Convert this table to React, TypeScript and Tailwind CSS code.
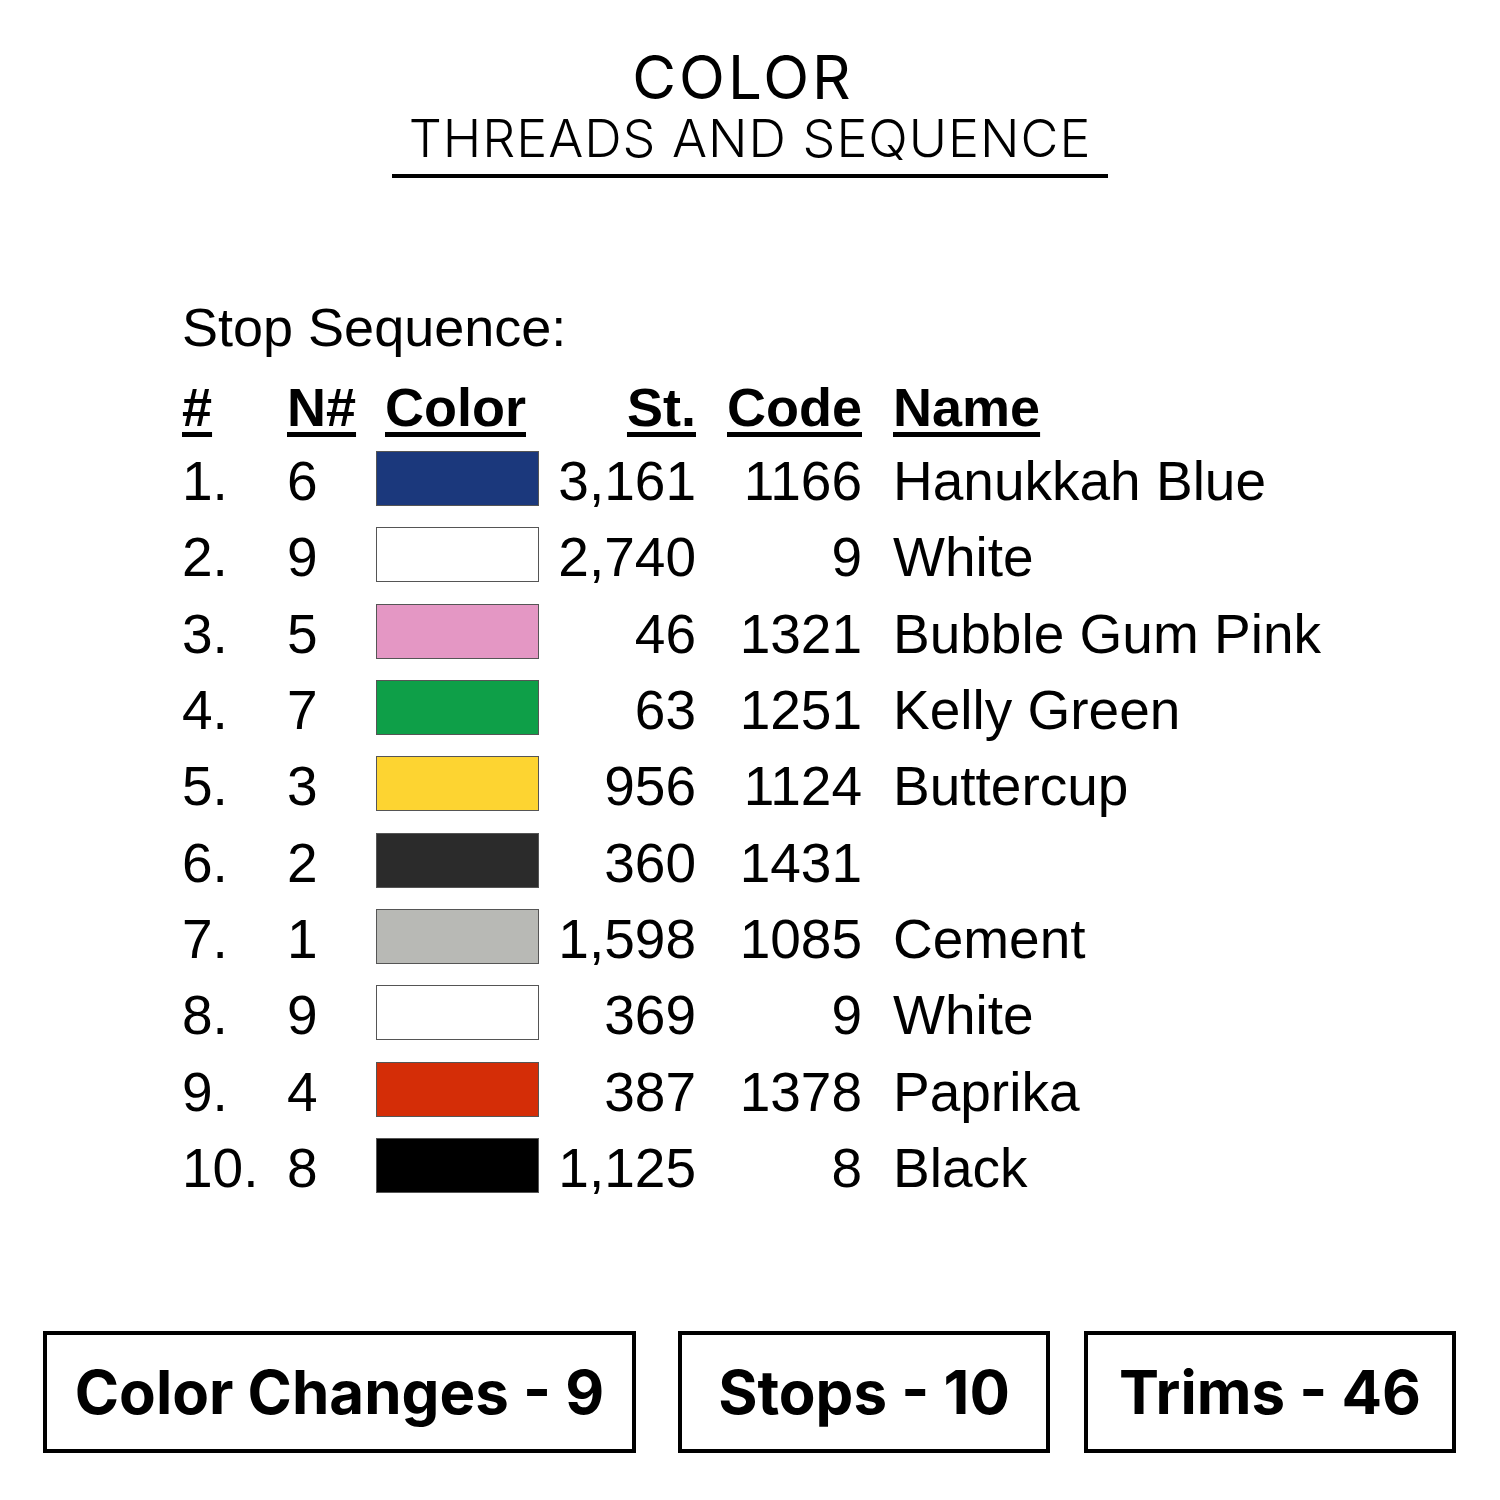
import React from "react";

const rows = [
  { n: "1.", nn: "6", color: "#1b387c", st: "3,161", code: "1166", name: "Hanukkah Blue" },
  { n: "2.", nn: "9", color: "#ffffff", st: "2,740", code: "9", name: "White" },
  { n: "3.", nn: "5", color: "#e497c4", st: "46", code: "1321", name: "Bubble Gum Pink" },
  { n: "4.", nn: "7", color: "#0e9f48", st: "63", code: "1251", name: "Kelly Green" },
  { n: "5.", nn: "3", color: "#fdd431", st: "956", code: "1124", name: "Buttercup" },
  { n: "6.", nn: "2", color: "#2b2b2b", st: "360", code: "1431", name: "" },
  { n: "7.", nn: "1", color: "#b8b9b5", st: "1,598", code: "1085", name: "Cement" },
  { n: "8.", nn: "9", color: "#ffffff", st: "369", code: "9", name: "White" },
  { n: "9.", nn: "4", color: "#d42d07", st: "387", code: "1378", name: "Paprika" },
  { n: "10.", nn: "8", color: "#000000", st: "1,125", code: "8", name: "Black" },
];

const grid = "grid grid-cols-[105px_89px_163px_157px_166px_1fr]";

export default function App() {
  return (
    <div className="w-[1500px] h-[1500px] bg-white text-black flex flex-col">
      <div className="flex flex-col items-center pt-[44px]">
        <div className="text-[60px] leading-[66px] font-normal font-['Inter',sans-serif] tracking-[3px] pr-[14px]">
          COLOR
        </div>
        <div className="text-[52px] leading-[58px] font-light font-['Inter',sans-serif] tracking-[1px] border-b-[4px] border-black w-[716px] text-center pb-[6px] whitespace-nowrap">
          THREADS AND SEQUENCE
        </div>
      </div>

      <div className="pl-[182px] pt-[114px] font-['Liberation_Sans',Arial,sans-serif] text-[54px]">
        <div className="leading-[70px] h-[70px]">Stop Sequence:</div>
        <div className={`${grid} font-bold leading-[76px] h-[76px] mt-[7px]`}>
          <div><span className="underline decoration-[5px] underline-offset-[6px]">#</span></div>
          <div><span className="underline decoration-[5px] underline-offset-[6px]">N#</span></div>
          <div className="pl-[9px]"><span className="underline decoration-[5px] underline-offset-[6px]">Color</span></div>
          <div className="text-right"><span className="underline decoration-[5px] underline-offset-[6px]">St.</span></div>
          <div className="text-right"><span className="underline decoration-[5px] underline-offset-[6px]">Code</span></div>
          <div className="pl-[31px]"><span className="underline decoration-[5px] underline-offset-[6px]">Name</span></div>
        </div>
        <div className="-mt-[2px] text-[55px]">
          {rows.map((r) => (
            <div key={r.n} className={`${grid} leading-[76px] h-[76.3px] items-center`}>
              <div>{r.n}</div>
              <div>{r.nn}</div>
              <div className="flex items-center -mt-[5px]">
                <div
                  className="w-[163px] h-[55px] border border-[#555]"
                  style={{ backgroundColor: r.color }}
                />
              </div>
              <div className="text-right">{r.st}</div>
              <div className="text-right">{r.code}</div>
              <div className="pl-[31px] whitespace-nowrap">{r.name}</div>
            </div>
          ))}
        </div>
      </div>

      <div className="flex pl-[43px] mt-[125px] font-['Inter',sans-serif] font-bold text-[60px]">
        <div className="w-[593px] h-[122px] border-[4px] border-black flex items-center justify-center">
          Color Changes - 9
        </div>
        <div className="w-[372px] h-[122px] border-[4px] border-black flex items-center justify-center ml-[42px]">
          Stops - 10
        </div>
        <div className="w-[372px] h-[122px] border-[4px] border-black flex items-center justify-center ml-[34px]">
          Trims - 46
        </div>
      </div>
    </div>
  );
}
